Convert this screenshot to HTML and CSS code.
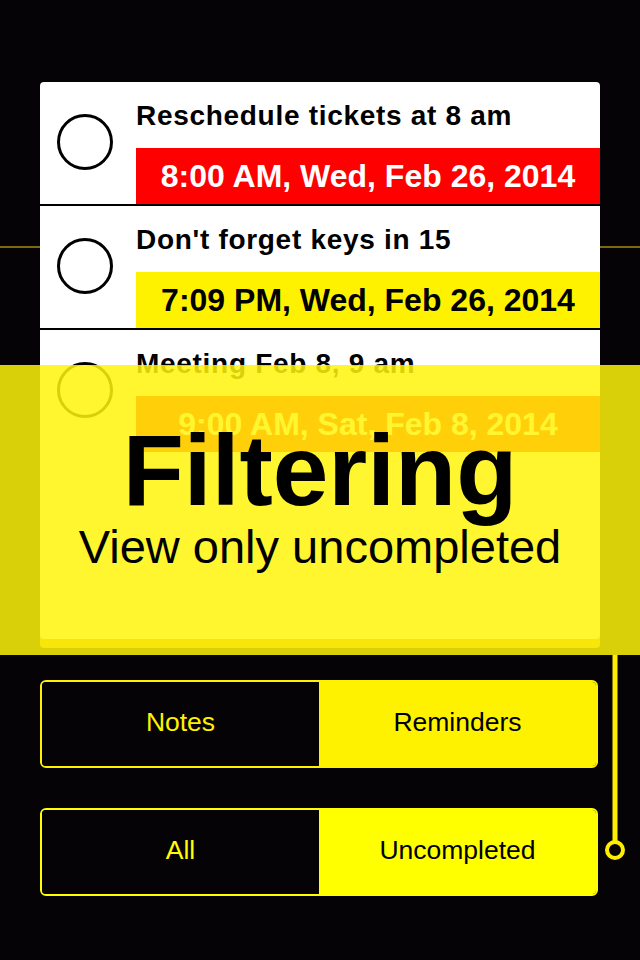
FILE: index.html
```html
<!DOCTYPE html>
<html>
<head>
<meta charset="utf-8">
<link rel="stylesheet" href="styles.css">
</head>
<body>
<div class="screen">
  <div class="card">
    <div class="row">
      <span class="check"></span>
      <div class="body">
        <div class="title">Reschedule tickets at 8 am</div>
        <div class="date date-red">8:00 AM, Wed, Feb 26, 2014</div>
      </div>
    </div>
    <div class="row">
      <span class="check"></span>
      <div class="body">
        <div class="title">Don't forget keys in 15</div>
        <div class="date date-yellow">7:09 PM, Wed, Feb 26, 2014</div>
      </div>
    </div>
    <div class="row">
      <span class="check"></span>
      <div class="body">
        <div class="title">Meeting Feb 8, 9 am</div>
        <div class="date date-red">9:00 AM, Sat, Feb 8, 2014</div>
      </div>
    </div>
  </div>
  <div class="lower">
    <div class="controls">
      <div class="seg seg-a">
        <div class="opt">Notes</div>
        <div class="opt on">Reminders</div>
      </div>
      <div class="seg seg-b">
        <div class="opt">All</div>
        <div class="opt on">Uncompleted</div>
      </div>
    </div>
    <svg class="connector" width="42" height="210" viewBox="0 0 42 210">
      <rect x="14.5" y="0" width="5" height="187" fill="#ffee00"/>
      <circle cx="17" cy="195" r="8" fill="none" stroke="#ffee00" stroke-width="4"/>
    </svg>
  </div>
  <div class="overlay">
    <div class="big">Filtering</div>
    <div class="sub">View only uncompleted</div>
  </div>
</div>
</body>
</html>
```
FILE: styles.css
```css
html, body {
  margin: 0;
  padding: 0;
  background: #050305;
}

.screen {
  position: relative;
  width: 640px;
  height: 960px;
  box-sizing: border-box;
  padding-top: 82px;
  overflow: hidden;
  font-family: "Liberation Sans", Arial, sans-serif;
  background:
    linear-gradient(#7c6a12, #7c6a12) 0 246px / 100% 2px no-repeat,
    #050305;
}

.card {
  margin: 0 40px;
  height: 557px;
  background: #ffffff;
  border-radius: 4px;
  box-shadow: 0 9px 0 #d29600;
}

.row {
  display: grid;
  grid-template-columns: 96px 1fr;
  height: 124px;
  box-sizing: border-box;
  border-bottom: 2px solid #000;
}

.row:last-child {
  border-bottom: none;
}

.check {
  display: block;
  margin: 32px 0 0 17px;
  width: 56px;
  height: 56px;
  box-sizing: border-box;
  border: 3px solid #000;
  border-radius: 50%;
}

.body {
  padding-top: 18px;
  min-width: 0;
}

.title {
  font-weight: 700;
  font-size: 28px;
  line-height: 32px;
  letter-spacing: 0.7px;
  color: #000;
  white-space: nowrap;
  margin-bottom: 16px;
}

.date {
  height: 56px;
  line-height: 56px;
  text-align: center;
  font-weight: 700;
  font-size: 32px;
  white-space: nowrap;
}

.date-red {
  background: #ff0000;
  color: #ffffff;
}

.date-yellow {
  background: #fff200;
  color: #000;
}

.lower {
  display: flex;
  margin-top: 16px;
}

.controls {
  width: 558px;
  margin-left: 40px;
  padding-top: 25px;
  display: flex;
  flex-direction: column;
  gap: 40px;
}

.seg {
  display: grid;
  grid-template-columns: 1fr 1fr;
  height: 88px;
  box-sizing: border-box;
  border: 2px solid #fff200;
  border-radius: 6px;
  overflow: hidden;
}

.opt {
  display: flex;
  align-items: center;
  justify-content: center;
  padding-bottom: 4px;
  font-size: 26.5px;
  color: #fff200;
  background: #050305;
}

.opt.on {
  background: #fff200;
  color: #000;
}

.seg-b {
  border-color: #ffff00;
}

.seg-b .opt {
  color: #ffff00;
}

.seg-b .opt.on {
  background: #ffff00;
  color: #000;
}

.connector {
  display: block;
}

.overlay {
  position: absolute;
  left: 0;
  top: 365px;
  width: 640px;
  height: 290px;
  box-sizing: border-box;
  padding-top: 55px;
  background: rgba(255, 245, 12, 0.85);
  text-align: center;
  color: #000;
}

.big {
  font-weight: 700;
  font-size: 100px;
  line-height: 100px;
}

.sub {
  margin-top: -2px;
  font-size: 47px;
  line-height: 58px;
}
```
